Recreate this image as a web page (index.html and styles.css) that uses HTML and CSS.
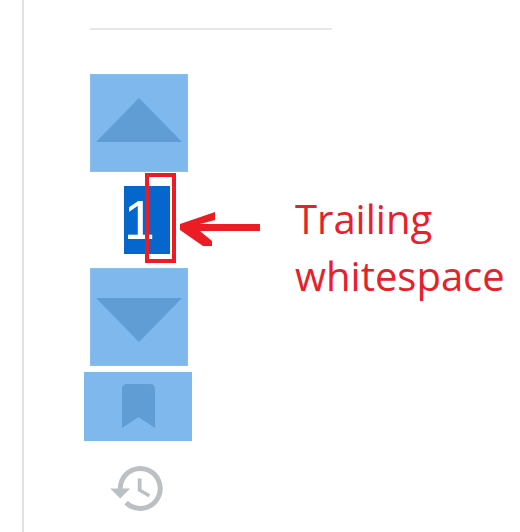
FILE: index.html
```html
<!doctype html>
<html lang="en">

<head>
	<meta charset="utf-8">
	<meta name="viewport" content="width=device-width, initial-scale=1">
	<title>Trailing whitespace</title>
	<link rel="stylesheet" href="styles.css">
</head>

<body>

	<main class="post">
		<hr class="divider">

		<div class="votes">
			<button class="vote-btn" type="button" aria-label="Up vote">
				<svg class="vote-icon vote-icon-up" viewBox="0 0 86 44"><path d="M0 44 43 0 86 44Z"/></svg>
			</button>

			<div class="vote-count"><span class="vote-num">1 </span></div>

			<button class="vote-btn" type="button" aria-label="Down vote">
				<svg class="vote-icon vote-icon-down" viewBox="0 0 86 44"><path d="M0 0H86L43 44Z"/></svg>
			</button>

			<button class="bookmark-btn" type="button" aria-label="Bookmark">
				<svg class="bookmark-icon" viewBox="0 0 33 44"><path d="M0 5Q0 0 5 0H28Q33 0 33 5V44L16.500 33 0 44Z"/></svg>
			</button>

			<svg class="history-icon" viewBox="1 3 21 18" aria-label="History">
				<path d="M13 3a9 9 0 0 0-9 9H1l3.890 3.890.070.140L9 12H6c0-3.870 3.130-7 7-7s7 3.130 7 7-3.130 7-7 7c-1.930 0-3.680-.790-4.940-2.060l-1.420 1.420A8.954 8.954 0 0 0 13 21a9 9 0 0 0 0-18zm-1 5v5l4.280 2.540.720-1.210-3.500-2.080V8H12z"/>
			</svg>
		</div>
	</main>

	<!-- красная пометка поверх скриншота -->
	<div class="mark-box"></div>
	<svg class="mark-arrow" viewBox="0 0 84 40">
		<path d="M2 14 37 2V10L22 14H82V21H22L34 31V36H25L2 20Z"/>
	</svg>
	<p class="mark-text">Trailing<br>whitespace</p>

</body>
</html>
```

FILE: styles.css
```css
* {
	box-sizing: border-box;
	margin: 0;
	padding: 0;
}

body {
	position: relative;
	min-height: 532px;
	overflow: hidden;
	background: #fff;
	font-family: "Liberation Sans", Arial, sans-serif;
}

.post {
	min-height: 532px;
	margin-left: 22px;
	padding: 28px 0 0 66px;
	border-left: 2px solid #e0e2e4;
}

.divider {
	width: 242px;
	height: 2px;
	border: 0;
	background: #e6e7e8;
}

/* Колонка голосования */

.votes {
	display: flex;
	flex-direction: column;
	align-items: center;
	width: 98px;
	margin-top: 44px;
}

.vote-btn {
	display: flex;
	flex: none;
	align-items: center;
	justify-content: center;
	width: 98px;
	height: 98px;
	border: 1px solid #8ac0ee;
	background: #7fb8ec;
}

.vote-icon {
	display: block;
	width: 86px;
	height: 44px;
	fill: #5f9dd4;
}

.vote-icon-up {
	margin-bottom: 6px;
}

.vote-icon-down {
	margin-top: 6px;
}

.vote-count {
	display: flex;
	align-items: center;
	justify-content: center;
	height: 96px;
	margin-left: 16px;
}

.vote-num {
	color: #fff;
	font-size: 56px;
	line-height: 68px;
	white-space: pre;
	background: #0566cc;
}

.bookmark-btn {
	display: flex;
	flex: none;
	align-items: center;
	justify-content: center;
	width: 108px;
	height: 69px;
	margin: 6px -4px 0 -6px;
	border: 0;
	background: #7fb8ec;
}

.bookmark-icon {
	display: block;
	width: 33px;
	height: 44px;
	margin-bottom: 1px;
	fill: #5f9dd4;
}

.history-icon {
	flex: none;
	width: 53px;
	height: 45px;
	margin-top: 25px;
	margin-right: 5px;
	fill: #bbc0c4;
}

/* Пометка поверх скриншота */

.mark-box {
	position: absolute;
	top: 173px;
	left: 145px;
	width: 31px;
	height: 90px;
	border: 4px solid #ec1c24;
}

.mark-arrow {
	position: absolute;
	top: 210px;
	left: 178px;
	width: 84px;
	height: 40px;
	fill: #ec1c24;
}

.mark-text {
	position: absolute;
	top: 190px;
	left: 295px;
	color: #e8202a;
	font-family: "Open Sans", sans-serif;
	font-size: 40px;
	line-height: 57px;
	white-space: nowrap;
}
```
